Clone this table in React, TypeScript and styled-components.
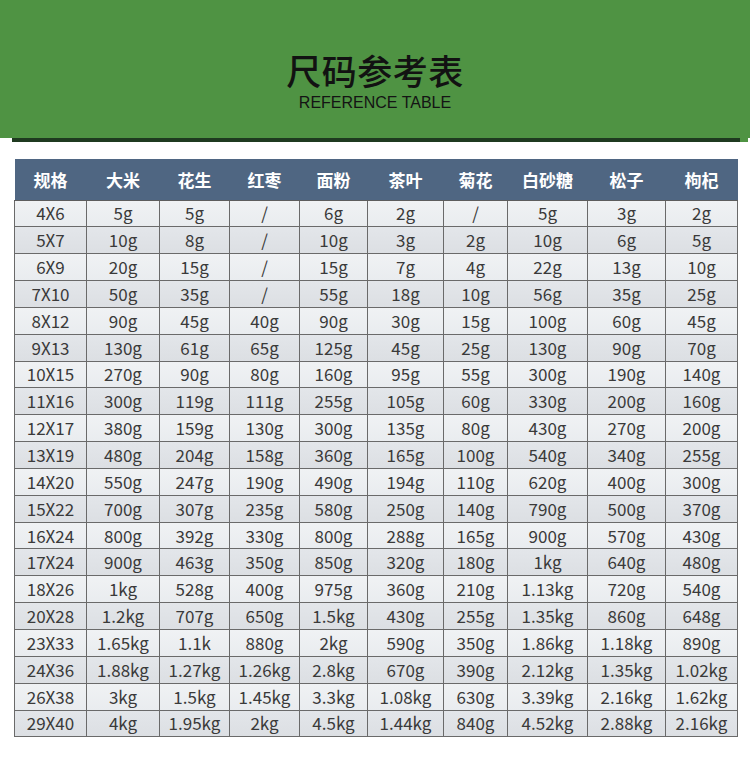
import React from "react";
import styled, { createGlobalStyle } from "styled-components";

const GlobalStyle = createGlobalStyle`
  html, body { margin: 0; padding: 0; background: #ffffff; }
  body { font-family: "Noto Sans CJK SC", "Noto Sans", sans-serif; }
`;

const Page = styled.div`
  width: 750px;
  min-height: 759px;
  background: #ffffff;
  display: flex;
  flex-direction: column;
`;

const Banner = styled.header`
  height: 138px;
  background: #4f9343;
  display: flex;
  flex-direction: column;
  align-items: center;
  padding-top: 52px;
  box-sizing: border-box;
`;

const Title = styled.h1`
  margin: 0;
  font-family: "Noto Sans CJK SC", sans-serif;
  font-weight: 500;
  font-size: 35px;
  line-height: 36px;
  color: #121212;
  letter-spacing: 0.5px;
`;

const Subtitle = styled.div`
  margin-top: 7px;
  font-family: "Liberation Sans", Arial, sans-serif;
  font-size: 16px;
  line-height: 16px;
  color: #141414;
`;

const BannerEdge = styled.div`
  height: 4px;
  margin: 0 10px 0 12px;
  background: #1f3a20;
  box-shadow: 8px 0 0 0 #4f9343;
`;

const Table = styled.table`
  margin: 17px 0 0 14px;
  width: 723px;
  border-collapse: collapse;
  table-layout: fixed;
`;

const HeadRow = styled.tr`
  height: 41px;
  background: #4f6682;
`;

const HeadCell = styled.th`
  padding: 0;
  font-family: "Noto Sans CJK SC", sans-serif;
  font-weight: 700;
  font-size: 17px;
  color: #ffffff;
  text-align: center;
  border-bottom: 1px solid #5d5d5d;
`;

const Row = styled.tr<{ $alt: boolean }>`
  height: 26.85px;
  background: ${(p) =>
    p.$alt
      ? "linear-gradient(180deg, #e3e6ea 0%, #dcdfe3 100%)"
      : "linear-gradient(180deg, #f0f2f4 0%, #e9ecef 100%)"};
`;

const Cell = styled.td`
  padding: 0;
  border: 1px solid #6a6a6a;
  font-family: "Noto Sans CJK SC", sans-serif;
  font-weight: 400;
  font-size: 17px;
  line-height: 24px;
  color: #3a3a3a;
  text-align: center;
  white-space: nowrap;
`;

const widths = [72, 73, 70, 70, 68, 76, 64, 80, 78, 72];
const heads = ["规格", "大米", "花生", "红枣", "面粉", "茶叶", "菊花", "白砂糖", "松子", "枸杞"];

const rows: string[][] = [
  ["4X6", "5g", "5g", "/", "6g", "2g", "/", "5g", "3g", "2g"],
  ["5X7", "10g", "8g", "/", "10g", "3g", "2g", "10g", "6g", "5g"],
  ["6X9", "20g", "15g", "/", "15g", "7g", "4g", "22g", "13g", "10g"],
  ["7X10", "50g", "35g", "/", "55g", "18g", "10g", "56g", "35g", "25g"],
  ["8X12", "90g", "45g", "40g", "90g", "30g", "15g", "100g", "60g", "45g"],
  ["9X13", "130g", "61g", "65g", "125g", "45g", "25g", "130g", "90g", "70g"],
  ["10X15", "270g", "90g", "80g", "160g", "95g", "55g", "300g", "190g", "140g"],
  ["11X16", "300g", "119g", "111g", "255g", "105g", "60g", "330g", "200g", "160g"],
  ["12X17", "380g", "159g", "130g", "300g", "135g", "80g", "430g", "270g", "200g"],
  ["13X19", "480g", "204g", "158g", "360g", "165g", "100g", "540g", "340g", "255g"],
  ["14X20", "550g", "247g", "190g", "490g", "194g", "110g", "620g", "400g", "300g"],
  ["15X22", "700g", "307g", "235g", "580g", "250g", "140g", "790g", "500g", "370g"],
  ["16X24", "800g", "392g", "330g", "800g", "288g", "165g", "900g", "570g", "430g"],
  ["17X24", "900g", "463g", "350g", "850g", "320g", "180g", "1kg", "640g", "480g"],
  ["18X26", "1kg", "528g", "400g", "975g", "360g", "210g", "1.13kg", "720g", "540g"],
  ["20X28", "1.2kg", "707g", "650g", "1.5kg", "430g", "255g", "1.35kg", "860g", "648g"],
  ["23X33", "1.65kg", "1.1k", "880g", "2kg", "590g", "350g", "1.86kg", "1.18kg", "890g"],
  ["24X36", "1.88kg", "1.27kg", "1.26kg", "2.8kg", "670g", "390g", "2.12kg", "1.35kg", "1.02kg"],
  ["26X38", "3kg", "1.5kg", "1.45kg", "3.3kg", "1.08kg", "630g", "3.39kg", "2.16kg", "1.62kg"],
  ["29X40", "4kg", "1.95kg", "2kg", "4.5kg", "1.44kg", "840g", "4.52kg", "2.88kg", "2.16kg"],
];

export default function App() {
  return (
    <>
      <GlobalStyle />
      <Page>
        <Banner>
          <Title>尺码参考表</Title>
          <Subtitle>REFERENCE TABLE</Subtitle>
        </Banner>
        <BannerEdge />
        <Table>
          <colgroup>
            {widths.map((w, i) => (
              <col key={i} style={{ width: w }} />
            ))}
          </colgroup>
          <thead>
            <HeadRow>
              {heads.map((h) => (
                <HeadCell key={h}>{h}</HeadCell>
              ))}
            </HeadRow>
          </thead>
          <tbody>
            {rows.map((r, i) => (
              <Row key={r[0]} $alt={i % 2 === 1}>
                {r.map((c, j) => (
                  <Cell key={j}>{c}</Cell>
                ))}
              </Row>
            ))}
          </tbody>
        </Table>
      </Page>
    </>
  );
}
